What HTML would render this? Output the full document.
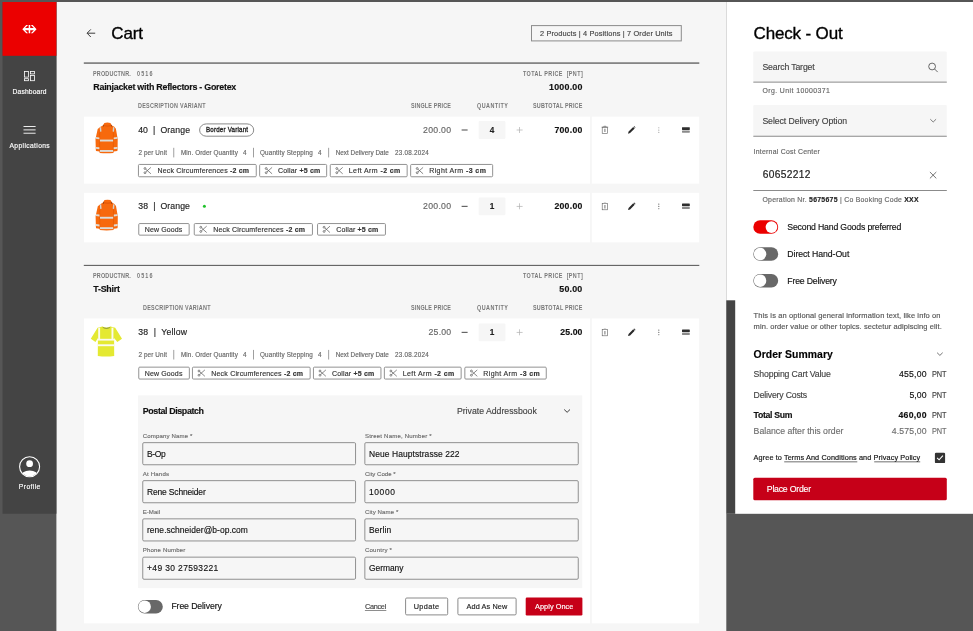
<!DOCTYPE html>
<html lang="en"><head><meta charset="utf-8">
<title>Cart - Check-Out</title>
<style>
html,body{margin:0;padding:0;}
body{width:973px;height:631px;overflow:hidden;background:#565656;position:relative;
font-family:"Liberation Sans",sans-serif;}
.page,.txt{position:absolute;left:0;top:0;width:973px;height:631px;}
.txt{will-change:transform;}
.b{position:absolute;box-sizing:border-box;}
.t{position:absolute;white-space:nowrap;line-height:1;margin:0;padding:0;-webkit-text-stroke-width:0.15px;}
.t b{font-weight:700;}
svg{position:absolute;overflow:visible;}
u{text-decoration:underline;text-underline-offset:1px;text-decoration-thickness:0.6px;}
</style></head><body>
<svg class="page" width="973" height="631" viewBox="0 0 973 631">
<rect x="56.40" y="2.00" width="669.90" height="630.00" fill="#f6f6f6"/>
<rect x="726.30" y="2.00" width="247.00" height="511.80" fill="#ffffff"/>
<rect x="726.30" y="300.30" width="8.90" height="213.50" fill="#444444"/>
<rect x="2.50" y="2.00" width="53.90" height="511.70" fill="#444444"/>
<rect x="2.50" y="2.00" width="53.90" height="53.80" fill="#eb0000"/>
<svg x="22.3" y="25" overflow="visible" width="14.3" height="8.3" viewBox="0 0 139 81">
<path fill="#fff" d="M0 40.5 L38 0 H56 L27 30 H62 V0 H77 V30 H112 L83 0 H101 L139 40.5 L101 81 H83 L112 51 H77 V81 H62 V51 H27 L56 81 H38 Z"/></svg>
<svg x="24.1" y="71.1" overflow="visible" width="10.8" height="10" viewBox="0 0 10.8 10" fill="none" stroke="#fff" stroke-width="0.8">
<rect x="0.4" y="0.4" width="4" height="5.6"/><rect x="6.4" y="0.4" width="4" height="2.4"/>
<rect x="0.4" y="7.6" width="4" height="2"/><rect x="6.4" y="4.4" width="4" height="5.2"/></svg>
<rect x="23.50" y="126.05" width="12.10" height="0.90" fill="#fff"/>
<rect x="23.50" y="129.45" width="12.10" height="0.90" fill="#fff"/>
<rect x="23.50" y="132.75" width="12.10" height="0.90" fill="#fff"/>
<svg x="19" y="456.1" overflow="visible" width="21.2" height="21.2" viewBox="0 0 21.2 21.2">
<defs><clipPath id="pc"><circle cx="10.6" cy="10.6" r="9.6"/></clipPath></defs>
<circle cx="10.6" cy="10.6" r="10" fill="none" stroke="#fff" stroke-width="1.1"/>
<circle cx="10.6" cy="7.6" r="3.4" fill="#fff"/>
<ellipse cx="10.6" cy="20.4" rx="9" ry="6" fill="#fff" clip-path="url(#pc)"/></svg>
<svg x="86.6" y="29.2" overflow="visible" width="8.6" height="8" viewBox="0 0 8.6 8" fill="none" stroke="#333" stroke-width="0.95">
<path d="M8.6 4H0.6M4.2 0.2L0.5 4L4.2 7.8"/></svg>
<rect x="531.50" y="25.60" width="149.80" height="15.30" fill="#f6f6f6" stroke="#8c8c8c" stroke-width="1"/>
<rect x="83.80" y="62.20" width="615.50" height="1.80" fill="#858585"/>
<rect x="84.00" y="116.60" width="506.00" height="67.00" fill="#ffffff"/>
<rect x="591.80" y="116.60" width="107.40" height="67.00" fill="#ffffff"/>
<svg x="95.50" y="122.80" overflow="visible" width="22.3" height="30.6" viewBox="0 0 22.3 30.6">
<path d="M8.9 0.1Q11.9 -0.5 14.9 0.1L16.3 2.6L18.8 4L20.4 6L22.2 16.2L22.1 27L21.8 28.3L18 28.7V30.1Q11 31 4.1 30.1V28.7L0.5 28.3L0.3 27L0 16.2L2.2 6.2L5 4L7.5 2.6Z" fill="#f7690d"/>
<path d="M4.1 9.5V28.6M17.9 9.5V28.6" stroke="#de5604" stroke-width="0.55" fill="none"/>
<path d="M8.2 1.6Q11.9 3.6 15.6 1.6L16.3 2.8Q11.9 5.2 7.5 2.8Z" fill="#e85c08"/>
<circle cx="7.9" cy="3" r="0.65" fill="#7a3a1c"/><circle cx="16" cy="3" r="0.65" fill="#7a3a1c"/>
<rect x="4.4" y="16.8" width="13.2" height="1.9" fill="#dcdcd8"/>
<rect x="4.4" y="27.2" width="13.2" height="1.9" fill="#dcdcd8"/>
<path d="M0.4 14.2L3.9 14.6V16.4L0.3 16ZM21.9 14.2L18.2 14.6V16.4L22 16ZM0.4 24.1L3.9 24.5V26.4L0.4 26ZM22 24.1L18.2 24.5V26.4L22 26Z" fill="#dcdcd8"/>
<path d="M4.2 4.6L5.6 4.2L6 8.8L4.6 9ZM18.9 4.6L17.5 4.2L17.1 8.8L18.5 9Z" fill="#d2d2ce"/></svg>
<rect x="199.60" y="123.90" width="54.10" height="12.30" rx="6.65" fill="#ffffff" stroke="#8a8a8a" stroke-width="1"/>
<rect x="173.40" y="147.80" width="0.80" height="9.60" fill="#888"/>
<rect x="253.20" y="147.80" width="0.80" height="9.60" fill="#888"/>
<rect x="328.30" y="147.80" width="0.80" height="9.60" fill="#888"/>
<rect x="138.45" y="164.45" width="117.80" height="12.30" rx="1.00" fill="#ffffff" stroke="#868686" stroke-width="0.9"/>
<svg x="143.80" y="167.20" overflow="visible" width="7.2" height="6.8" viewBox="0 0 7.2 6.8" fill="none" stroke="#555" stroke-width="0.7">
<circle cx="1.2" cy="1.3" r="0.95"/><circle cx="1.2" cy="5.5" r="0.95"/><path d="M1.9 2L7.1 6.6M1.9 4.8L7.1 0.2"/></svg>
<rect x="259.65" y="164.45" width="67.00" height="12.30" rx="1.00" fill="#ffffff" stroke="#868686" stroke-width="0.9"/>
<svg x="265.00" y="167.20" overflow="visible" width="7.2" height="6.8" viewBox="0 0 7.2 6.8" fill="none" stroke="#555" stroke-width="0.7">
<circle cx="1.2" cy="1.3" r="0.95"/><circle cx="1.2" cy="5.5" r="0.95"/><path d="M1.9 2L7.1 6.6M1.9 4.8L7.1 0.2"/></svg>
<rect x="330.25" y="164.45" width="76.90" height="12.30" rx="1.00" fill="#ffffff" stroke="#868686" stroke-width="0.9"/>
<svg x="335.60" y="167.20" overflow="visible" width="7.2" height="6.8" viewBox="0 0 7.2 6.8" fill="none" stroke="#555" stroke-width="0.7">
<circle cx="1.2" cy="1.3" r="0.95"/><circle cx="1.2" cy="5.5" r="0.95"/><path d="M1.9 2L7.1 6.6M1.9 4.8L7.1 0.2"/></svg>
<rect x="410.65" y="164.45" width="82.00" height="12.30" rx="1.00" fill="#ffffff" stroke="#868686" stroke-width="0.9"/>
<svg x="416.00" y="167.20" overflow="visible" width="7.2" height="6.8" viewBox="0 0 7.2 6.8" fill="none" stroke="#555" stroke-width="0.7">
<circle cx="1.2" cy="1.3" r="0.95"/><circle cx="1.2" cy="5.5" r="0.95"/><path d="M1.9 2L7.1 6.6M1.9 4.8L7.1 0.2"/></svg>
<rect x="461.60" y="129.55" width="6.00" height="0.90" fill="#333"/>
<rect x="478.70" y="121.10" width="26.70" height="17.80" rx="1.00" fill="#f6f6f6"/>
<rect x="516.60" y="129.65" width="6.00" height="0.70" fill="#b0b0b0"/>
<rect x="519.25" y="127.00" width="0.70" height="6.00" fill="#b0b0b0"/>
<svg x="601.6" y="125.90" overflow="visible" width="6.6" height="8" viewBox="0 0 6.6 8" fill="none" stroke="#5c5c5c" stroke-width="0.6">
<rect x="0.6" y="1.3" width="5.4" height="6.3"/><path d="M2.2 1.2V0.35H4.4V1.2M0 1.25H6.6" stroke="#666" stroke-width="0.6"/><path d="M3.3 2.9V6.2" stroke-width="1.2" stroke="#8a8a8a"/></svg>
<svg x="627.8" y="125.90" overflow="visible" width="8" height="8" viewBox="0 0 8 8">
<path d="M0.2 7.8L0.8 5.7L5.4 1.1L6.9 2.6L2.3 7.2Z M5.8 0.7Q6.4 0.1 7 0.7L7.3 1Q7.9 1.6 7.3 2.2L5.8 0.7Z" fill="#2b2b2b"/></svg>
<rect x="658.20" y="127.25" width="1.20" height="1.10" rx="0.40" fill="#a6a6a6"/>
<rect x="658.20" y="129.55" width="1.20" height="1.10" rx="0.40" fill="#a6a6a6"/>
<rect x="658.20" y="131.85" width="1.20" height="1.10" rx="0.40" fill="#a6a6a6"/>
<rect x="682.00" y="127.20" width="7.80" height="2.70" rx="0.40" fill="#2e2e2e"/>
<rect x="682.00" y="130.60" width="7.80" height="2.10" rx="0.40" fill="#8a8a8a"/>
<rect x="84.00" y="192.80" width="506.00" height="49.50" fill="#ffffff"/>
<rect x="591.80" y="192.80" width="107.40" height="49.50" fill="#ffffff"/>
<svg x="95.60" y="200.00" overflow="visible" width="22.3" height="30.6" viewBox="0 0 22.3 30.6">
<path d="M8.9 0.1Q11.9 -0.5 14.9 0.1L16.3 2.6L18.8 4L20.4 6L22.2 16.2L22.1 27L21.8 28.3L18 28.7V30.1Q11 31 4.1 30.1V28.7L0.5 28.3L0.3 27L0 16.2L2.2 6.2L5 4L7.5 2.6Z" fill="#f7690d"/>
<path d="M4.1 9.5V28.6M17.9 9.5V28.6" stroke="#de5604" stroke-width="0.55" fill="none"/>
<path d="M8.2 1.6Q11.9 3.6 15.6 1.6L16.3 2.8Q11.9 5.2 7.5 2.8Z" fill="#e85c08"/>
<circle cx="7.9" cy="3" r="0.65" fill="#7a3a1c"/><circle cx="16" cy="3" r="0.65" fill="#7a3a1c"/>
<rect x="4.4" y="16.8" width="13.2" height="1.9" fill="#dcdcd8"/>
<rect x="4.4" y="27.2" width="13.2" height="1.9" fill="#dcdcd8"/>
<path d="M0.4 14.2L3.9 14.6V16.4L0.3 16ZM21.9 14.2L18.2 14.6V16.4L22 16ZM0.4 24.1L3.9 24.5V26.4L0.4 26ZM22 24.1L18.2 24.5V26.4L22 26Z" fill="#dcdcd8"/>
<path d="M4.2 4.6L5.6 4.2L6 8.8L4.6 9ZM18.9 4.6L17.5 4.2L17.1 8.8L18.5 9Z" fill="#d2d2ce"/></svg>
<rect x="202.90" y="204.80" width="3.00" height="3.00" rx="1.50" fill="#1fc12a"/>
<rect x="138.75" y="223.55" width="50.40" height="11.60" rx="1.00" fill="#ffffff" stroke="#868686" stroke-width="0.9"/>
<rect x="194.25" y="223.55" width="118.20" height="11.60" rx="1.00" fill="#ffffff" stroke="#868686" stroke-width="0.9"/>
<svg x="199.60" y="225.95" overflow="visible" width="7.2" height="6.8" viewBox="0 0 7.2 6.8" fill="none" stroke="#555" stroke-width="0.7">
<circle cx="1.2" cy="1.3" r="0.95"/><circle cx="1.2" cy="5.5" r="0.95"/><path d="M1.9 2L7.1 6.6M1.9 4.8L7.1 0.2"/></svg>
<rect x="317.55" y="223.55" width="67.90" height="11.60" rx="1.00" fill="#ffffff" stroke="#868686" stroke-width="0.9"/>
<svg x="322.90" y="225.95" overflow="visible" width="7.2" height="6.8" viewBox="0 0 7.2 6.8" fill="none" stroke="#555" stroke-width="0.7">
<circle cx="1.2" cy="1.3" r="0.95"/><circle cx="1.2" cy="5.5" r="0.95"/><path d="M1.9 2L7.1 6.6M1.9 4.8L7.1 0.2"/></svg>
<rect x="461.60" y="205.85" width="6.00" height="0.90" fill="#333"/>
<rect x="478.70" y="197.40" width="26.70" height="17.80" rx="1.00" fill="#f6f6f6"/>
<rect x="516.60" y="205.95" width="6.00" height="0.70" fill="#b0b0b0"/>
<rect x="519.25" y="203.30" width="0.70" height="6.00" fill="#b0b0b0"/>
<svg x="601.6" y="202.20" overflow="visible" width="6.6" height="8" viewBox="0 0 6.6 8" fill="none" stroke="#5c5c5c" stroke-width="0.6">
<rect x="0.6" y="1.3" width="5.4" height="6.3"/><path d="M2.4 1V0.5H4.2V1" stroke="#aaa" stroke-width="0.5"/><path d="M3.3 2.9V6.2" stroke-width="1.2" stroke="#8a8a8a"/></svg>
<svg x="627.8" y="202.20" overflow="visible" width="8" height="8" viewBox="0 0 8 8">
<path d="M0.2 7.8L0.8 5.7L5.4 1.1L6.9 2.6L2.3 7.2Z M5.8 0.7Q6.4 0.1 7 0.7L7.3 1Q7.9 1.6 7.3 2.2L5.8 0.7Z" fill="#2b2b2b"/></svg>
<rect x="658.20" y="203.55" width="1.20" height="1.10" rx="0.40" fill="#666"/>
<rect x="658.20" y="205.85" width="1.20" height="1.10" rx="0.40" fill="#666"/>
<rect x="658.20" y="208.15" width="1.20" height="1.10" rx="0.40" fill="#666"/>
<rect x="682.00" y="203.50" width="7.80" height="2.70" rx="0.40" fill="#2e2e2e"/>
<rect x="682.00" y="206.90" width="7.80" height="2.10" rx="0.40" fill="#8a8a8a"/>
<rect x="83.80" y="264.85" width="615.50" height="1.15" fill="#666"/>
<rect x="84.00" y="318.50" width="506.00" height="304.80" fill="#ffffff"/>
<rect x="591.80" y="318.50" width="107.40" height="304.80" fill="#ffffff"/>
<svg x="90.60" y="326.30" overflow="visible" width="31.6" height="30.4" viewBox="0 0 31.6 30.4">
<path d="M7 1.5L11.8 0.3Q15.8 2.5 19.8 0.3L24.6 1.5L31.4 12.4L26.7 15.6L23.5 11.6L23.6 29.6Q15.5 30.9 7.2 29.6L7.3 11.6L4.9 15.6L0.2 12.4Z" fill="#e4e932"/>
<path d="M11.8 0.4Q15.8 2.6 19.8 0.4L19.2 1.8Q15.8 3.5 12.4 1.8Z" fill="#9aa23a"/>
<rect x="7.6" y="1.4" width="1.9" height="11.6" fill="#fbfbf0"/><rect x="20.9" y="1.4" width="1.9" height="11.6" fill="#fbfbf0"/>
<rect x="7.3" y="12.5" width="16.3" height="1.8" fill="#fbfbf0"/><rect x="7.3" y="18" width="16.3" height="1.9" fill="#fbfbf0"/></svg>
<rect x="173.40" y="349.90" width="0.80" height="9.60" fill="#888"/>
<rect x="253.20" y="349.90" width="0.80" height="9.60" fill="#888"/>
<rect x="328.30" y="349.90" width="0.80" height="9.60" fill="#888"/>
<rect x="138.75" y="367.15" width="50.60" height="11.90" rx="1.00" fill="#ffffff" stroke="#868686" stroke-width="0.9"/>
<rect x="192.45" y="367.15" width="117.70" height="11.90" rx="1.00" fill="#ffffff" stroke="#868686" stroke-width="0.9"/>
<svg x="197.80" y="369.70" overflow="visible" width="7.2" height="6.8" viewBox="0 0 7.2 6.8" fill="none" stroke="#555" stroke-width="0.7">
<circle cx="1.2" cy="1.3" r="0.95"/><circle cx="1.2" cy="5.5" r="0.95"/><path d="M1.9 2L7.1 6.6M1.9 4.8L7.1 0.2"/></svg>
<rect x="313.45" y="367.15" width="67.50" height="11.90" rx="1.00" fill="#ffffff" stroke="#868686" stroke-width="0.9"/>
<svg x="318.80" y="369.70" overflow="visible" width="7.2" height="6.8" viewBox="0 0 7.2 6.8" fill="none" stroke="#555" stroke-width="0.7">
<circle cx="1.2" cy="1.3" r="0.95"/><circle cx="1.2" cy="5.5" r="0.95"/><path d="M1.9 2L7.1 6.6M1.9 4.8L7.1 0.2"/></svg>
<rect x="384.35" y="367.15" width="76.80" height="11.90" rx="1.00" fill="#ffffff" stroke="#868686" stroke-width="0.9"/>
<svg x="389.70" y="369.70" overflow="visible" width="7.2" height="6.8" viewBox="0 0 7.2 6.8" fill="none" stroke="#555" stroke-width="0.7">
<circle cx="1.2" cy="1.3" r="0.95"/><circle cx="1.2" cy="5.5" r="0.95"/><path d="M1.9 2L7.1 6.6M1.9 4.8L7.1 0.2"/></svg>
<rect x="464.85" y="367.15" width="81.40" height="11.90" rx="1.00" fill="#ffffff" stroke="#868686" stroke-width="0.9"/>
<svg x="470.20" y="369.70" overflow="visible" width="7.2" height="6.8" viewBox="0 0 7.2 6.8" fill="none" stroke="#555" stroke-width="0.7">
<circle cx="1.2" cy="1.3" r="0.95"/><circle cx="1.2" cy="5.5" r="0.95"/><path d="M1.9 2L7.1 6.6M1.9 4.8L7.1 0.2"/></svg>
<rect x="461.60" y="331.85" width="6.00" height="0.90" fill="#333"/>
<rect x="478.70" y="323.40" width="26.70" height="17.80" rx="1.00" fill="#f6f6f6"/>
<rect x="516.60" y="331.95" width="6.00" height="0.70" fill="#b0b0b0"/>
<rect x="519.25" y="329.30" width="0.70" height="6.00" fill="#b0b0b0"/>
<svg x="601.6" y="328.20" overflow="visible" width="6.6" height="8" viewBox="0 0 6.6 8" fill="none" stroke="#5c5c5c" stroke-width="0.6">
<rect x="0.6" y="1.3" width="5.4" height="6.3"/><path d="M2.4 1V0.5H4.2V1" stroke="#aaa" stroke-width="0.5"/><path d="M3.3 2.9V6.2" stroke-width="1.2" stroke="#8a8a8a"/></svg>
<svg x="627.8" y="328.20" overflow="visible" width="8" height="8" viewBox="0 0 8 8">
<path d="M0.2 7.8L0.8 5.7L5.4 1.1L6.9 2.6L2.3 7.2Z M5.8 0.7Q6.4 0.1 7 0.7L7.3 1Q7.9 1.6 7.3 2.2L5.8 0.7Z" fill="#2b2b2b"/></svg>
<rect x="658.20" y="329.55" width="1.20" height="1.10" rx="0.40" fill="#666"/>
<rect x="658.20" y="331.85" width="1.20" height="1.10" rx="0.40" fill="#666"/>
<rect x="658.20" y="334.15" width="1.20" height="1.10" rx="0.40" fill="#666"/>
<rect x="682.00" y="329.50" width="7.80" height="2.70" rx="0.40" fill="#2e2e2e"/>
<rect x="682.00" y="332.90" width="7.80" height="2.10" rx="0.40" fill="#8a8a8a"/>
<rect x="138.10" y="395.40" width="444.10" height="192.70" fill="#f6f6f6"/>
<svg x="563.90" y="409.20" overflow="visible" width="6.4" height="3.4" viewBox="0 0 6.4 3.4" fill="none" stroke="#333" stroke-width="0.95">
<path d="M0.3 0.3L3.2 3.1L6.1000000000000005 0.3"/></svg>
<rect x="142.75" y="442.65" width="212.80" height="22.10" rx="1.20" fill="#f6f6f6" stroke="#848484" stroke-width="0.9"/>
<rect x="364.85" y="442.65" width="213.40" height="22.10" rx="1.20" fill="#f6f6f6" stroke="#848484" stroke-width="0.9"/>
<rect x="142.75" y="480.65" width="212.80" height="22.10" rx="1.20" fill="#f6f6f6" stroke="#848484" stroke-width="0.9"/>
<rect x="364.85" y="480.65" width="213.40" height="22.10" rx="1.20" fill="#f6f6f6" stroke="#848484" stroke-width="0.9"/>
<rect x="142.75" y="518.85" width="212.80" height="22.10" rx="1.20" fill="#f6f6f6" stroke="#848484" stroke-width="0.9"/>
<rect x="364.85" y="518.85" width="213.40" height="22.10" rx="1.20" fill="#f6f6f6" stroke="#848484" stroke-width="0.9"/>
<rect x="142.75" y="557.15" width="212.80" height="22.10" rx="1.20" fill="#f6f6f6" stroke="#848484" stroke-width="0.9"/>
<rect x="364.85" y="557.15" width="213.40" height="22.10" rx="1.20" fill="#f6f6f6" stroke="#848484" stroke-width="0.9"/>
<rect x="137.90" y="599.90" width="24.90" height="13.50" rx="6.75" fill="#686868"/>
<rect x="138.40" y="600.40" width="12.50" height="12.50" rx="6.25" fill="#ffffff"/>
<rect x="364.90" y="610.40" width="21.40" height="0.60" fill="#444"/>
<rect x="405.60" y="598.00" width="42.10" height="16.90" rx="1.20" fill="#ffffff" stroke="#8a8a8a" stroke-width="1"/>
<rect x="457.90" y="598.00" width="58.20" height="16.90" rx="1.20" fill="#ffffff" stroke="#8a8a8a" stroke-width="1"/>
<rect x="525.70" y="597.60" width="56.70" height="17.80" rx="1.20" fill="#c60018"/>
<rect x="753.30" y="51.60" width="193.50" height="30.40" rx="1.00" fill="#f6f6f6"/>
<rect x="753.30" y="81.70" width="193.50" height="0.80" fill="#6e6e6e"/>
<svg x="928.2" y="62.6" overflow="visible" width="9.8" height="9.8" viewBox="0 0 9.8 9.8" fill="none" stroke="#444" stroke-width="0.8">
<circle cx="3.9" cy="3.9" r="3.4"/><path d="M6.4 6.4L9.5 9.5"/></svg>
<rect x="753.30" y="104.90" width="193.50" height="31.00" rx="1.00" fill="#f6f6f6"/>
<rect x="753.30" y="135.80" width="193.50" height="0.80" fill="#6e6e6e"/>
<svg x="930.00" y="118.90" overflow="visible" width="6.4" height="3.4" viewBox="0 0 6.4 3.4" fill="none" stroke="#555" stroke-width="0.75">
<path d="M0.3 0.3L3.2 3.1L6.1000000000000005 0.3"/></svg>
<svg x="929.6" y="171.7" overflow="visible" width="7" height="7" viewBox="0 0 7 7" fill="none" stroke="#444" stroke-width="0.75">
<path d="M0.3 0.3L6.7 6.7M6.7 0.3L0.3 6.7"/></svg>
<rect x="753.30" y="190.00" width="193.50" height="0.80" fill="#6e6e6e"/>
<rect x="753.30" y="220.30" width="24.90" height="13.50" rx="6.75" fill="#eb0000"/>
<rect x="765.60" y="221.20" width="11.70" height="11.70" rx="5.85" fill="#ffffff"/>
<rect x="753.30" y="247.30" width="24.90" height="13.50" rx="6.75" fill="#686868"/>
<rect x="753.80" y="247.80" width="12.50" height="12.50" rx="6.25" fill="#ffffff"/>
<rect x="753.30" y="273.90" width="24.90" height="13.50" rx="6.75" fill="#686868"/>
<rect x="753.80" y="274.40" width="12.50" height="12.50" rx="6.25" fill="#ffffff"/>
<svg x="936.80" y="352.40" overflow="visible" width="6.2" height="3.3" viewBox="0 0 6.2 3.3" fill="none" stroke="#444" stroke-width="0.75">
<path d="M0.3 0.3L3.1 3.0L5.9 0.3"/></svg>
<rect x="784.20" y="461.60" width="73.10" height="0.60" fill="#111"/>
<rect x="874.20" y="461.60" width="46.00" height="0.60" fill="#111"/>
<rect x="934.90" y="452.70" width="10.20" height="10.40" rx="1.20" fill="#333"/>
<svg x="936.6" y="455" overflow="visible" width="6.8" height="5.6" viewBox="0 0 6.8 5.6" fill="none" stroke="#fff" stroke-width="1.1">
<path d="M0.5 2.9L2.5 4.8L6.3 0.6"/></svg>
<rect x="753.30" y="477.80" width="193.50" height="22.50" rx="1.50" fill="#c60018"/>
</svg>
<div class="txt">
<span class="t" style="top:89.03px;font-size:6.7px;color:#fff;letter-spacing:0.160px;left:12.60px;">Dashboard</span>
<span class="t" style="top:143.03px;font-size:6.7px;color:#fff;letter-spacing:0.367px;left:9.55px;">Applications</span>
<span class="t" style="top:484.03px;font-size:6.7px;color:#fff;letter-spacing:0.422px;left:18.85px;">Profile</span>
<span class="t" style="top:25.03px;font-size:17px;color:#000;letter-spacing:-0.142px;left:111.30px;-webkit-text-stroke:0.35px #000;">Cart</span>
<span class="t" style="top:30.02px;font-size:7.4px;color:#444;letter-spacing:0.129px;left:540.00px;">2 Products | 4 Positions | 7 Order Units</span>
<span class="t" style="top:71.03px;font-size:6.3px;color:#787878;font-weight:700;letter-spacing:0.219px;left:93.30px;-webkit-text-stroke-width:0;transform:scaleX(0.86);transform-origin:0 0;">PRODUCTNR.</span>
<span class="t" style="top:71.03px;font-size:6.3px;color:#787878;font-weight:700;letter-spacing:1.297px;left:136.70px;-webkit-text-stroke-width:0;transform:scaleX(0.86);transform-origin:0 0;">0516</span>
<span class="t" style="top:83.02px;font-size:8.9px;color:#111;font-weight:700;letter-spacing:-0.255px;left:93.30px;">Rainjacket with Reflectors - Goretex</span>
<span class="t" style="top:103.02px;font-size:6.3px;color:#787878;font-weight:700;letter-spacing:0.350px;left:138.00px;-webkit-text-stroke-width:0;transform:scaleX(0.86);transform-origin:0 0;">DESCRIPTION VARIANT</span>
<span class="t" style="top:71.02px;font-size:6.3px;color:#787878;font-weight:700;letter-spacing:0.461px;left:522.70px;-webkit-text-stroke-width:0;transform:scaleX(0.86);transform-origin:0 0;">TOTAL PRICE&nbsp;&nbsp;[PNT]</span>
<span class="t" style="top:83.02px;font-size:8.9px;color:#111;font-weight:700;letter-spacing:0.201px;left:549.10px;">1000.00</span>
<span class="t" style="top:103.02px;font-size:6.3px;color:#787878;font-weight:700;letter-spacing:0.167px;left:411.29px;-webkit-text-stroke-width:0;transform:scaleX(0.86);transform-origin:0 0;">SINGLE PRICE</span>
<span class="t" style="top:103.02px;font-size:6.3px;color:#787878;font-weight:700;letter-spacing:0.535px;left:476.50px;-webkit-text-stroke-width:0;transform:scaleX(0.86);transform-origin:0 0;">QUANTITY</span>
<span class="t" style="top:103.02px;font-size:6.3px;color:#787878;font-weight:700;letter-spacing:0.211px;left:533.09px;-webkit-text-stroke-width:0;transform:scaleX(0.86);transform-origin:0 0;">SUBTOTAL PRICE</span>
<span class="t" style="top:126.03px;font-size:8.7px;color:#222;letter-spacing:0.103px;left:138.20px;">40&nbsp; |&nbsp; Orange</span>
<span class="t" style="top:127.03px;font-size:6.5px;color:#222;letter-spacing:0.213px;left:205.80px;-webkit-text-stroke-width:0.3px;transform:scaleX(0.95);transform-origin:0 0;">Border Variant</span>
<span class="t" style="top:150.03px;font-size:6.3px;color:#666;letter-spacing:0.143px;left:138.40px;">2 per Unit</span>
<span class="t" style="top:150.03px;font-size:6.3px;color:#666;letter-spacing:0.103px;left:181.00px;">Min. Order Quantity</span>
<span class="t" style="top:150.03px;font-size:6.3px;color:#666;left:242.90px;">4</span>
<span class="t" style="top:150.03px;font-size:6.3px;color:#666;letter-spacing:0.165px;left:260.00px;">Quantity Stepping</span>
<span class="t" style="top:150.03px;font-size:6.3px;color:#666;left:318.00px;">4</span>
<span class="t" style="top:150.03px;font-size:6.3px;color:#666;letter-spacing:0.041px;left:335.70px;">Next Delivery Date</span>
<span class="t" style="top:150.03px;font-size:6.3px;color:#666;letter-spacing:0.243px;left:395.00px;">23.08.2024</span>
<span class="t" style="top:167.04px;font-size:7.0px;color:#333;letter-spacing:0.181px;left:157.50px;">Neck Circumferences <b>-2 cm</b></span>
<span class="t" style="top:167.04px;font-size:7.0px;color:#333;letter-spacing:0.174px;left:278.00px;">Collar <b>+5 cm</b></span>
<span class="t" style="top:167.04px;font-size:7.0px;color:#333;letter-spacing:0.399px;left:348.80px;">Left Arm <b>-2 cm</b></span>
<span class="t" style="top:167.04px;font-size:7.0px;color:#333;letter-spacing:0.408px;left:429.20px;">Right Arm <b>-3 cm</b></span>
<span class="t" style="top:126.02px;font-size:8.7px;color:#666;letter-spacing:0.304px;left:423.00px;">200.00</span>
<span class="t" style="top:127.02px;font-size:8.2px;color:#222;font-weight:700;left:489.82px;">4</span>
<span class="t" style="top:126.02px;font-size:8.7px;color:#111;font-weight:700;letter-spacing:0.284px;left:554.40px;">700.00</span>
<span class="t" style="top:202.02px;font-size:8.7px;color:#222;letter-spacing:0.086px;left:138.30px;">38&nbsp; |&nbsp; Orange</span>
<span class="t" style="top:226.04px;font-size:7.0px;color:#333;letter-spacing:0.115px;left:144.80px;">New Goods</span>
<span class="t" style="top:226.04px;font-size:7.0px;color:#333;letter-spacing:0.193px;left:213.20px;">Neck Circumferences <b>-2 cm</b></span>
<span class="t" style="top:226.04px;font-size:7.0px;color:#333;letter-spacing:0.165px;left:336.20px;">Collar <b>+5 cm</b></span>
<span class="t" style="top:202.02px;font-size:8.7px;color:#666;letter-spacing:0.304px;left:423.00px;">200.00</span>
<span class="t" style="top:203.03px;font-size:8.2px;color:#222;font-weight:700;left:489.82px;">1</span>
<span class="t" style="top:202.02px;font-size:8.7px;color:#111;font-weight:700;letter-spacing:0.284px;left:554.40px;">200.00</span>
<span class="t" style="top:273.02px;font-size:6.3px;color:#787878;font-weight:700;letter-spacing:0.219px;left:93.30px;-webkit-text-stroke-width:0;transform:scaleX(0.86);transform-origin:0 0;">PRODUCTNR.</span>
<span class="t" style="top:273.02px;font-size:6.3px;color:#787878;font-weight:700;letter-spacing:1.297px;left:136.70px;-webkit-text-stroke-width:0;transform:scaleX(0.86);transform-origin:0 0;">0516</span>
<span class="t" style="top:285.02px;font-size:8.9px;color:#111;font-weight:700;letter-spacing:-0.218px;left:93.20px;">T-Shirt</span>
<span class="t" style="top:305.02px;font-size:6.3px;color:#787878;font-weight:700;letter-spacing:0.350px;left:142.70px;-webkit-text-stroke-width:0;transform:scaleX(0.86);transform-origin:0 0;">DESCRIPTION VARIANT</span>
<span class="t" style="top:273.03px;font-size:6.3px;color:#787878;font-weight:700;letter-spacing:0.461px;left:522.70px;-webkit-text-stroke-width:0;transform:scaleX(0.86);transform-origin:0 0;">TOTAL PRICE&nbsp;&nbsp;[PNT]</span>
<span class="t" style="top:285.03px;font-size:8.9px;color:#111;font-weight:700;letter-spacing:0.195px;left:559.31px;">50.00</span>
<span class="t" style="top:305.02px;font-size:6.3px;color:#787878;font-weight:700;letter-spacing:0.167px;left:411.29px;-webkit-text-stroke-width:0;transform:scaleX(0.86);transform-origin:0 0;">SINGLE PRICE</span>
<span class="t" style="top:305.02px;font-size:6.3px;color:#787878;font-weight:700;letter-spacing:0.535px;left:476.50px;-webkit-text-stroke-width:0;transform:scaleX(0.86);transform-origin:0 0;">QUANTITY</span>
<span class="t" style="top:305.02px;font-size:6.3px;color:#787878;font-weight:700;letter-spacing:0.211px;left:533.09px;-webkit-text-stroke-width:0;transform:scaleX(0.86);transform-origin:0 0;">SUBTOTAL PRICE</span>
<span class="t" style="top:328.02px;font-size:8.7px;color:#222;letter-spacing:0.215px;left:138.30px;">38&nbsp; |&nbsp; Yellow</span>
<span class="t" style="top:352.02px;font-size:6.3px;color:#666;letter-spacing:0.143px;left:138.40px;">2 per Unit</span>
<span class="t" style="top:352.02px;font-size:6.3px;color:#666;letter-spacing:0.103px;left:181.00px;">Min. Order Quantity</span>
<span class="t" style="top:352.02px;font-size:6.3px;color:#666;left:242.90px;">4</span>
<span class="t" style="top:352.02px;font-size:6.3px;color:#666;letter-spacing:0.165px;left:260.00px;">Quantity Stepping</span>
<span class="t" style="top:352.02px;font-size:6.3px;color:#666;left:318.00px;">4</span>
<span class="t" style="top:352.02px;font-size:6.3px;color:#666;letter-spacing:0.041px;left:335.70px;">Next Delivery Date</span>
<span class="t" style="top:352.02px;font-size:6.3px;color:#666;letter-spacing:0.243px;left:395.00px;">23.08.2024</span>
<span class="t" style="top:370.04px;font-size:7.0px;color:#333;letter-spacing:0.128px;left:144.80px;">New Goods</span>
<span class="t" style="top:370.04px;font-size:7.0px;color:#333;letter-spacing:0.189px;left:211.30px;">Neck Circumferences <b>-2 cm</b></span>
<span class="t" style="top:370.04px;font-size:7.0px;color:#333;letter-spacing:0.193px;left:331.90px;">Collar <b>+5 cm</b></span>
<span class="t" style="top:370.04px;font-size:7.0px;color:#333;letter-spacing:0.407px;left:402.70px;">Left Arm <b>-2 cm</b></span>
<span class="t" style="top:370.04px;font-size:7.0px;color:#333;letter-spacing:0.394px;left:483.30px;">Right Arm <b>-3 cm</b></span>
<span class="t" style="top:328.02px;font-size:8.7px;color:#666;letter-spacing:0.188px;left:428.60px;">25.00</span>
<span class="t" style="top:329.03px;font-size:8.2px;color:#222;font-weight:700;left:489.82px;">1</span>
<span class="t" style="top:328.02px;font-size:8.7px;color:#111;font-weight:700;letter-spacing:0.088px;left:560.30px;">25.00</span>
<span class="t" style="top:407.02px;font-size:8.9px;color:#111;font-weight:700;letter-spacing:-0.385px;left:142.80px;">Postal Dispatch</span>
<span class="t" style="top:407.02px;font-size:8.7px;color:#444;letter-spacing:0.012px;left:456.90px;">Private Addressbook</span>
<span class="t" style="top:433.03px;font-size:6.1px;color:#6c6c6c;letter-spacing:0.116px;left:142.80px;">Company Name *</span>
<span class="t" style="top:433.03px;font-size:6.1px;color:#6c6c6c;letter-spacing:0.173px;left:364.90px;">Street Name, Number *</span>
<span class="t" style="top:450.03px;font-size:9.1px;color:#111;letter-spacing:-0.340px;left:147.00px;-webkit-text-stroke:0.15px #111;transform:scaleX(0.93);transform-origin:0 0;">B-Op</span>
<span class="t" style="top:450.03px;font-size:9.1px;color:#111;letter-spacing:0.088px;left:369.30px;-webkit-text-stroke:0.15px #111;transform:scaleX(0.93);transform-origin:0 0;">Neue Hauptstrasse 222</span>
<span class="t" style="top:471.03px;font-size:6.1px;color:#6c6c6c;letter-spacing:0.160px;left:142.80px;">At Hands</span>
<span class="t" style="top:471.03px;font-size:6.1px;color:#6c6c6c;letter-spacing:-0.003px;left:364.90px;">City Code *</span>
<span class="t" style="top:488.03px;font-size:9.1px;color:#111;letter-spacing:-0.162px;left:147.00px;-webkit-text-stroke:0.15px #111;transform:scaleX(0.93);transform-origin:0 0;">Rene Schneider</span>
<span class="t" style="top:488.03px;font-size:9.1px;color:#111;letter-spacing:0.638px;left:369.30px;-webkit-text-stroke:0.15px #111;transform:scaleX(0.93);transform-origin:0 0;">10000</span>
<span class="t" style="top:509.03px;font-size:6.1px;color:#6c6c6c;letter-spacing:-0.016px;left:142.80px;">E-Mail</span>
<span class="t" style="top:509.03px;font-size:6.1px;color:#6c6c6c;letter-spacing:0.098px;left:364.90px;">City Name *</span>
<span class="t" style="top:526.02px;font-size:9.1px;color:#111;letter-spacing:0.054px;left:147.00px;-webkit-text-stroke:0.15px #111;transform:scaleX(0.93);transform-origin:0 0;">rene.schneider@b-op.com</span>
<span class="t" style="top:526.02px;font-size:9.1px;color:#111;letter-spacing:0.124px;left:369.30px;-webkit-text-stroke:0.15px #111;transform:scaleX(0.93);transform-origin:0 0;">Berlin</span>
<span class="t" style="top:547.03px;font-size:6.1px;color:#6c6c6c;letter-spacing:0.136px;left:142.80px;">Phone Number</span>
<span class="t" style="top:547.03px;font-size:6.1px;color:#6c6c6c;letter-spacing:0.212px;left:364.90px;">Country *</span>
<span class="t" style="top:564.03px;font-size:9.1px;color:#111;letter-spacing:0.400px;left:147.00px;-webkit-text-stroke:0.15px #111;transform:scaleX(0.93);transform-origin:0 0;">+49 30 27593221</span>
<span class="t" style="top:564.03px;font-size:9.1px;color:#111;letter-spacing:-0.052px;left:369.30px;-webkit-text-stroke:0.15px #111;transform:scaleX(0.93);transform-origin:0 0;">Germany</span>
<span class="t" style="top:602.02px;font-size:8.7px;color:#111;letter-spacing:-0.105px;left:171.40px;">Free Delivery</span>
<span class="t" style="top:603.03px;font-size:7.3px;color:#444;letter-spacing:-0.264px;left:364.90px;">Cancel</span>
<span class="t" style="top:603.02px;font-size:7.3px;color:#222;letter-spacing:0.374px;left:413.70px;">Update</span>
<span class="t" style="top:603.02px;font-size:7.3px;color:#222;letter-spacing:0.106px;left:466.50px;">Add As New</span>
<span class="t" style="top:603.02px;font-size:7.3px;color:#fff;letter-spacing:0.052px;left:535.10px;">Apply Once</span>
<span class="t" style="top:25.03px;font-size:17px;color:#000;letter-spacing:-0.150px;left:753.50px;-webkit-text-stroke:0.35px #000;">Check - Out</span>
<span class="t" style="top:63.03px;font-size:8.7px;color:#444;letter-spacing:-0.136px;left:762.40px;">Search Target</span>
<span class="t" style="top:88.02px;font-size:6.9px;color:#666;letter-spacing:0.432px;left:762.40px;">Org. Unit 10000371</span>
<span class="t" style="top:117.03px;font-size:8.7px;color:#444;letter-spacing:-0.064px;left:762.40px;">Select Delivery Option</span>
<span class="t" style="top:149.03px;font-size:6.9px;color:#666;letter-spacing:0.244px;left:753.60px;">Internal Cost Center</span>
<span class="t" style="top:170.03px;font-size:10.2px;color:#222;letter-spacing:0.339px;left:762.80px;-webkit-text-stroke:0.2px #222;">60652212</span>
<span class="t" style="top:197.02px;font-size:6.9px;color:#666;letter-spacing:0.262px;left:762.50px;">Operation Nr. <b style="color:#222">5675675</b> | Co Booking Code <b style="color:#222">XXX</b></span>
<span class="t" style="top:223.02px;font-size:8.7px;color:#111;letter-spacing:-0.166px;left:787.30px;">Second Hand Goods preferred</span>
<span class="t" style="top:250.03px;font-size:8.7px;color:#111;letter-spacing:-0.055px;left:787.30px;">Direct Hand-Out</span>
<span class="t" style="top:277.02px;font-size:8.7px;color:#111;letter-spacing:-0.171px;left:787.30px;">Free Delivery</span>
<span class="t" style="top:312.03px;font-size:7.5px;color:#555;letter-spacing:0.105px;left:753.60px;">This is an optional general information text, like info on</span>
<span class="t" style="top:323.03px;font-size:7.5px;color:#555;letter-spacing:0.081px;left:753.60px;">min. order value or other topics. sectetur adipiscing elit.</span>
<span class="t" style="top:350.02px;font-size:10.4px;color:#000;font-weight:700;letter-spacing:0.054px;left:753.60px;">Order Summary</span>
<span class="t" style="top:370.02px;font-size:8.7px;color:#444;letter-spacing:-0.124px;left:753.60px;">Shopping Cart Value</span>
<span class="t" style="top:370.02px;font-size:8.7px;color:#111;letter-spacing:0.204px;left:898.91px;">455,00</span>
<span class="t" style="top:371.03px;font-size:8.2px;color:#444;letter-spacing:-0.187px;left:931.80px;transform:scaleX(0.9);transform-origin:0 0;">PNT</span>
<span class="t" style="top:391.03px;font-size:8.7px;color:#444;letter-spacing:-0.185px;left:753.60px;">Delivery Costs</span>
<span class="t" style="top:391.03px;font-size:8.7px;color:#111;letter-spacing:0.059px;left:909.40px;">5,00</span>
<span class="t" style="top:392.03px;font-size:8.2px;color:#444;letter-spacing:-0.187px;left:931.80px;transform:scaleX(0.9);transform-origin:0 0;">PNT</span>
<span class="t" style="top:411.02px;font-size:8.7px;color:#111;font-weight:700;letter-spacing:-0.307px;left:753.60px;">Total Sum</span>
<span class="t" style="top:411.02px;font-size:8.7px;color:#111;font-weight:700;letter-spacing:0.304px;left:898.40px;">460,00</span>
<span class="t" style="top:412.03px;font-size:8.2px;color:#444;letter-spacing:-0.187px;left:931.80px;transform:scaleX(0.9);transform-origin:0 0;">PNT</span>
<span class="t" style="top:427.02px;font-size:8.7px;color:#6e6e6e;letter-spacing:-0.001px;left:753.60px;">Balance after this order</span>
<span class="t" style="top:427.02px;font-size:8.7px;color:#6e6e6e;letter-spacing:0.125px;left:891.80px;">4.575,00</span>
<span class="t" style="top:428.02px;font-size:8.2px;color:#6e6e6e;letter-spacing:-0.187px;left:931.80px;transform:scaleX(0.9);transform-origin:0 0;">PNT</span>
<span class="t" style="top:454.02px;font-size:7.3px;color:#111;letter-spacing:0.096px;left:753.60px;">Agree to Terms And Conditions and Privacy Policy</span>
<span class="t" style="top:485.03px;font-size:8.7px;color:#fff;letter-spacing:-0.206px;left:766.80px;">Place Order</span>
</div>
</body></html>
